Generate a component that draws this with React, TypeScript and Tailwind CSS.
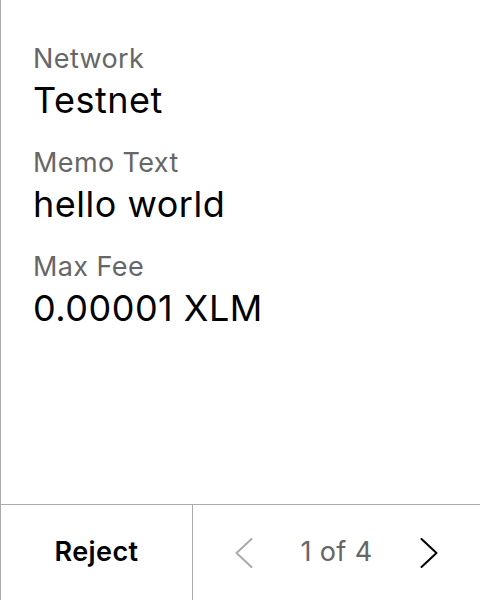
import React from "react";

const rows = [
  { label: "Network", value: "Testnet" },
  { label: "Memo Text", value: "hello world" },
  { label: "Max Fee", value: "0.00001 XLM" },
];

const Chevron: React.FC<{ dir: "left" | "right"; className?: string }> = ({ dir, className }) => (
  <svg width="18" height="30" viewBox="0 0 18 30" fill="none" className={className}>
    <path
      d={dir === "left" ? "M16.5 1 L1.5 15 L16.5 29" : "M1.5 1 L16.5 15 L1.5 29"}
      stroke="currentColor"
      strokeWidth="2"
      strokeLinecap="round"
      strokeLinejoin="round"
    />
  </svg>
);

const App: React.FC = () => {
  return (
    <div
      className="w-[480px] h-[600px] flex flex-col bg-white border-l border-[#aaaaaa]"
      style={{ fontFamily: "Inter, 'Noto Sans', sans-serif" }}
    >
      {/* details */}
      <div className="flex-1 pl-8 pt-[42px] flex flex-col gap-[24px]">
        {rows.map((r) => (
          <div key={r.label} className="flex flex-col">
            <span className="text-[27px] leading-[33px] tracking-[0.4px] text-[#666666]">{r.label}</span>
            <span className="mt-[3px] text-[36px] leading-[44px] tracking-[0.5px] text-black">{r.value}</span>
          </div>
        ))}
      </div>

      {/* footer */}
      <div className="h-[96px] flex border-t border-[#aaaaaa]">
        <div className="w-[192px] flex items-center justify-center border-r border-[#aaaaaa]">
          <span className="text-[27px] font-semibold tracking-[0.4px] text-black">Reject</span>
        </div>
        <div className="flex-1 flex items-center justify-center gap-[47px]">
          <Chevron dir="left" className="text-[#aaaaaa]" />
          <span className="text-[27px] tracking-[0.4px] text-[#666666]">1 of 4</span>
          <Chevron dir="right" className="text-black" />
        </div>
      </div>
    </div>
  );
};

export default App;
